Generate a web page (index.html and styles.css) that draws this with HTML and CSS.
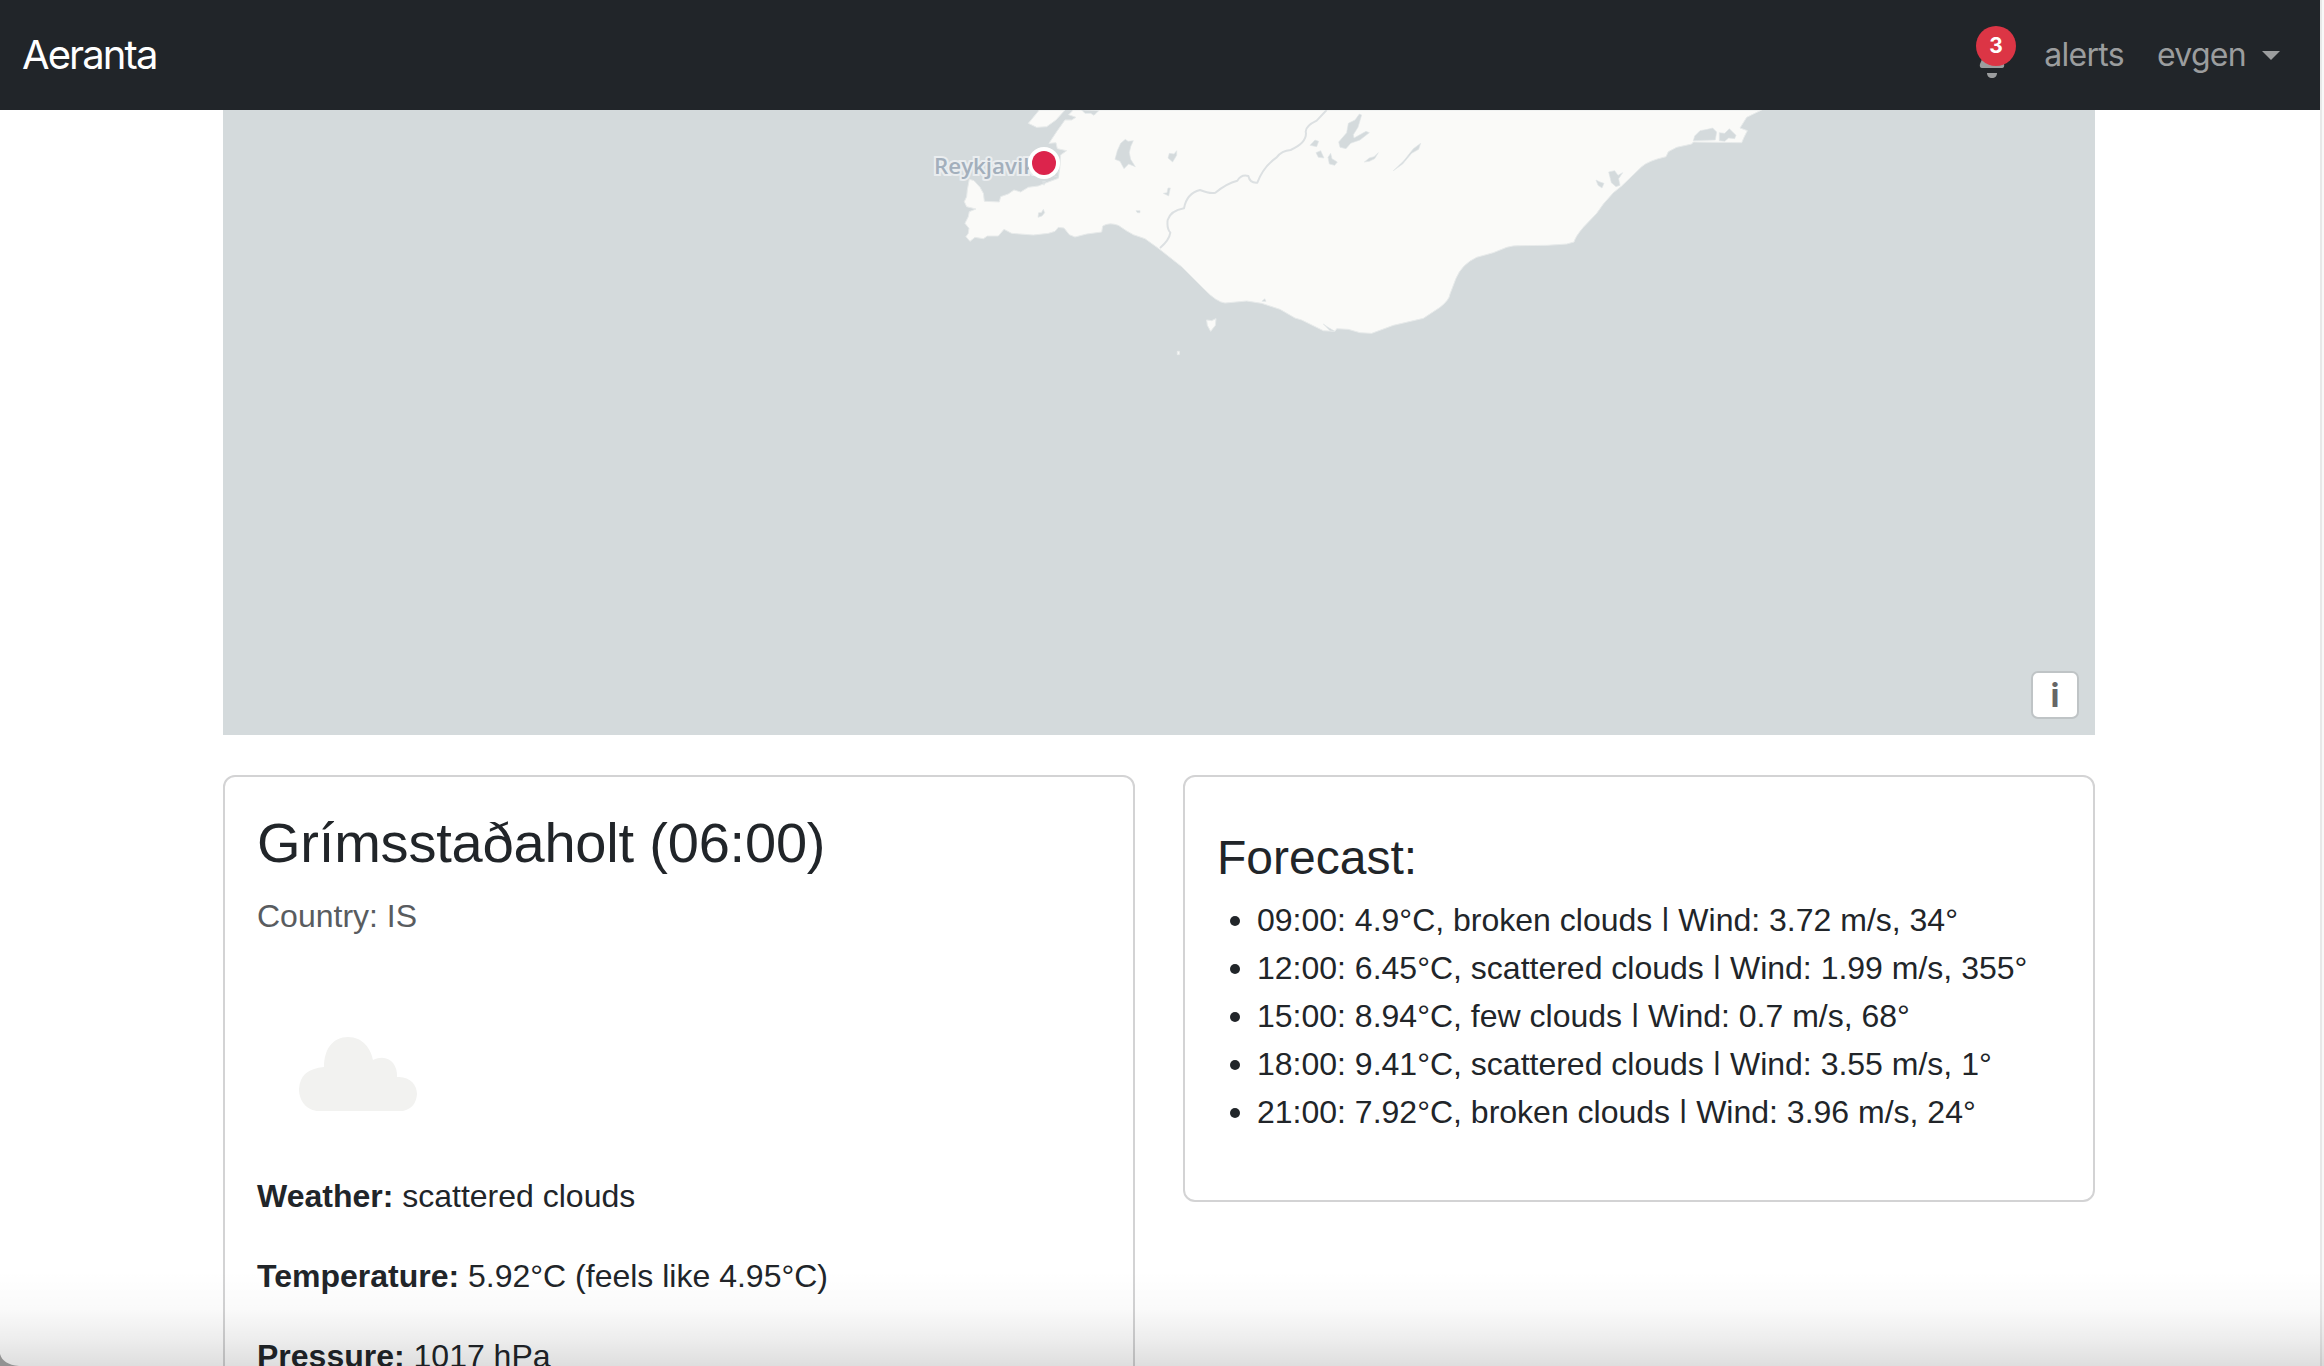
FILE: index.html
```html
<!DOCTYPE html>
<html lang="en">
<head>
<meta charset="utf-8">
<title>Aeranta</title>
<link rel="stylesheet" href="styles.css">
</head>
<body>
<div class="window">
  <div class="page">
    <header class="navbar">
      <a class="brand">Aeranta</a>
      <nav class="nav">
        <a class="bell">
          <svg class="bell-icon" viewBox="0 0 32 44" width="32" height="44"><path d="M16 3c-6 2-9 7-9 13v6l-3 7c-.6 2 0 4 2 4h20c2 0 2.600-2 2-4l-3-7v-6c0-6-3-11-9-13z"/><path d="M11 38h10c0 3-2 5-5 5s-5-2-5-5z"/></svg>
          <span class="badge">3</span>
        </a>
        <a class="nav-link alerts">alerts</a>
        <a class="nav-link user">evgen<span class="caret"></span></a>
      </nav>
    </header>
    <main class="container">
      <section class="map">
        <svg class="map-canvas" viewBox="223 110 1872 625">
          <g transform="translate(900 100) scale(.33333)" stroke-linejoin="round">
            <path class="land" d="M520 30L506 44 528 52 515 60 495 60 470 95 447 130 468 128 472 146 500 152 482 165 480 200 475 235 435 250 415 258 385 262 362 276 342 270 325 282 302 290 298 306 253 304 250 280 240 262 222 242 208 238 202 270 200 290 193 305 200 320 228 327 208 335 205 350 195 370 207 385 205 400 198 410 210 424 225 412 250 416 262 408 295 408 312 388 335 400 400 405 445 400 465 394 475 382 492 384 508 404 525 411 560 402 605 396 608 378Q628 366 655 376Q680 394 700 404L735 416 775 445 845 500 915 570Q950 606 975 609L1040 603 1085 610 1140 628 1185 654 1205 660 1270 692 1305 694 1310 686 1345 688 1380 698 1415 700 1480 676 1570 655 1620 622Q1648 600 1650 582L1668 535Q1686 492 1730 472L1780 458 1820 442Q1840 436 1860 437L1940 436 2000 432 2022 426Q2026 410 2050 382L2090 340 2110 312 2140 278 2165 258 2225 200Q2245 182 2298 170L2305 155 2330 142 2375 132 2380 126 2525 128 2532 112 2542 92 2520 84 2540 52 2585 30z"/>
            <path class="land" d="M418 30L385 70 410 82 440 80 468 60 495 30zM920 660L935 662 948 656 946 676 932 694 922 676zM832 754h6v10h-6z"/>
            <path class="lake" d="M545 30L555 40 572 40 582 46 596 32zM676 118L684 124 700 122 692 140 688 158 692 178 706 200 686 192 672 206 660 184 645 178 652 152 662 130zM804 174L808 160 822 162 830 152 830 166 818 186zM804 264L811 264 806 288 790 280 801 278zM414 352L416 338 424 338 430 328 434 338 426 348zM1086 604L1094 596 1098 604zM708 332h12v6h-8zM428 244h8l-4 12zM462 210l12 2 2 20-14-4z"/>
            <path class="lake" d="M1316 126L1340 98 1345 70 1365 60 1378 42 1385 45 1374 82 1360 104 1362 114 1398 94 1408 98 1380 120 1352 130 1338 146 1320 142zM1230 136L1245 120 1256 124 1250 140zM1248 158L1262 152 1272 174 1255 172zM1284 172L1292 160 1296 176 1312 186 1304 196 1288 192zM1393 186L1408 174 1422 170 1435 158 1424 176 1408 184zM1480 212L1510 184 1540 146 1562 130 1556 148 1535 160 1508 192zM1270 672L1284 682 1305 694 1290 692zM2126 216L2144 212 2154 226 2168 218 2156 236 2160 256 2148 260 2134 248 2130 232zM2088 240L2100 246 2112 250 2106 264 2094 256zM2380 122L2384 108 2400 92 2422 88 2438 84 2450 96 2446 120zM2458 122L2458 98 2474 100 2488 86 2508 106 2504 116 2486 114 2474 124z"/>
            <path class="river" d="M780 444Q808 420 811 398Q800 386 803 360Q812 332 852 325Q860 280 900 270Q930 282 946 278Q980 250 1012 242Q1024 222 1045 228Q1050 250 1072 248Q1090 200 1130 172Q1145 152 1172 150Q1218 130 1218 100Q1212 80 1250 62L1280 30"/>
          </g>
          <text class="city" x="934" y="173.500" textLength="102" lengthAdjust="spacingAndGlyphs">Reykjavik</text>
          <circle cx="1044" cy="163" r="16" fill="#fff"/>
          <circle cx="1044" cy="163" r="12" fill="#dc244c"/>
        </svg>
        <button class="info">i</button>
      </section>
      <div class="row">
        <article class="card current">
          <h2 class="title">Grímsstaðaholt (06:00)</h2>
          <p class="country">Country: IS</p>
          <svg class="weather-icon" viewBox="0 0 200 200"><path d="M62 139C50 139 42 129 42 117Q43 97 67 95C67 77 76 65 91 65S114 77 116 88C130 81 141 91 140 105C153 104 160 113 160 122Q159 136 146 139z"/></svg>
          <p class="fact"><strong>Weather:</strong> scattered clouds</p>
          <p class="fact"><strong>Temperature:</strong> 5.92°C (feels like 4.95°C)</p>
          <p class="fact"><strong>Pressure:</strong> 1017 hPa</p>
        </article>
        <article class="card forecast">
          <h3 class="subtitle">Forecast:</h3>
          <ul class="list">
            <li>09:00: 4.9°C, broken clouds <span class="bar">|</span> Wind: 3.72 m/s, 34°</li>
            <li>12:00: 6.45°C, scattered clouds <span class="bar">|</span> Wind: 1.99 m/s, 355°</li>
            <li>15:00: 8.94°C, few clouds <span class="bar">|</span> Wind: 0.7 m/s, 68°</li>
            <li>18:00: 9.41°C, scattered clouds <span class="bar">|</span> Wind: 3.55 m/s, 1°</li>
            <li>21:00: 7.92°C, broken clouds <span class="bar">|</span> Wind: 3.96 m/s, 24°</li>
          </ul>
        </article>
      </div>
    </main>
  </div>
  <div class="edge"></div>
  <div class="fade"></div>
  <svg class="corner" viewBox="0 0 20 12" width="20" height="12"><path d="M0 0C2 7 8 11 19 12H0z"/></svg>
</div>
</body>
</html>
```
FILE: styles.css
```css
* { box-sizing: border-box; }
body {
  margin: 0;
  background: #fff;
  color: #212529;
  font: 32px/48px "Liberation Sans", Arial, sans-serif;
}
.window {
  position: relative;
  display: flex;
  width: 2324px;
  height: 1366px;
  overflow: hidden;
}
.page { width: 2320px; }
.edge {
  width: 4px;
  background: #f8f8f8;
  border-left: 2px solid #e8e8e8;
}
.navbar {
  display: flex;
  justify-content: space-between;
  align-items: center;
  height: 110px;
  padding: 0 40px 0 22px;
  background: #212529;
  font-family: Inter, sans-serif;
}
.brand { color: #fff; font-size: 40px; letter-spacing: -1.9px; }
.nav { display: flex; align-items: center; color: #9b9d9e; }
.bell { position: relative; display: flex; margin-right: 36px; }
.bell-icon { margin-top: 4px; fill: #9b9d9e; }
.badge {
  position: absolute;
  left: 0;
  top: -5px;
  width: 40px;
  height: 40px;
  border-radius: 50%;
  background: #dc3545;
  color: #fff;
  font-size: 21px;
  font-weight: 700;
  line-height: 40px;
  text-align: center;
}
.nav-link { letter-spacing: -.7px; }
.alerts { margin-right: 33px; }
.user { display: flex; align-items: center; gap: 16px; }
.caret {
  border: 9px solid transparent;
  border-top-color: #9b9d9e;
  border-bottom: 0;
}
.container { width: 1872px; margin-left: 223px; }
.map { position: relative; height: 625px; background: #d4dadc; }
.map-canvas { display: block; width: 100%; height: 100%; }
.land { fill: #fafaf8; stroke: #e8ebeb; stroke-width: 3; }
.lake { fill: #d4dadc; stroke: #e3e7e8; stroke-width: 2; }
.river { fill: none; stroke: #dce0e2; stroke-width: 6; }
.city {
  font: 600 21px "Open Sans", sans-serif;
  fill: #a3afbc;
  stroke: #eaedef;
  stroke-width: 4px;
  paint-order: stroke;
}
.info {
  position: absolute;
  right: 16px;
  bottom: 16px;
  width: 48px;
  height: 48px;
  padding: 0;
  border: 2px solid #bfc4c6;
  border-radius: 7px;
  background: #fff;
  color: #666;
  font: 700 33px/44px Inter, sans-serif;
}
.row { display: grid; grid-template-columns: 1fr 1fr; gap: 48px; margin-top: 40px; align-items: start; }
.card { padding: 32px; border: 2px solid #d3d3d4; border-radius: 12px; }
.current { height: 700px; }
.title { margin: 0 0 16px; font-size: 56px; font-weight: 400; line-height: 67px; letter-spacing: -.2px; }
.country { margin: 0 0 32px; color: #595c5f; }
.weather-icon { display: block; width: 200px; height: 200px; fill: #f2f2f0; }
.fact { margin: 0 0 32px; }
.forecast { height: 427px; padding-top: 52px; }
.subtitle { margin: 0; font-size: 48px; font-weight: 400; line-height: 58px; }
.list { margin: 9px 0 0; padding: 0; list-style: none; }
.list li { display: flex; align-items: center; white-space: pre; }
.list li::before {
  content: "";
  width: 10px;
  height: 10px;
  margin: 2px 17px 0 13px;
  border-radius: 50%;
  background: #212529;
}
.bar { transform: scaleY(.78); transform-origin: 0 12px; }
.fade {
  position: absolute;
  left: 0;
  right: 0;
  bottom: 0;
  height: 96px;
  background: linear-gradient(rgba(0,0,0,0), rgba(0,0,0,.02) 40%, rgba(0,0,0,.07) 72%, rgba(0,0,0,.13));
}
.corner { position: absolute; left: 0; bottom: 0; fill: #929292; }
```
